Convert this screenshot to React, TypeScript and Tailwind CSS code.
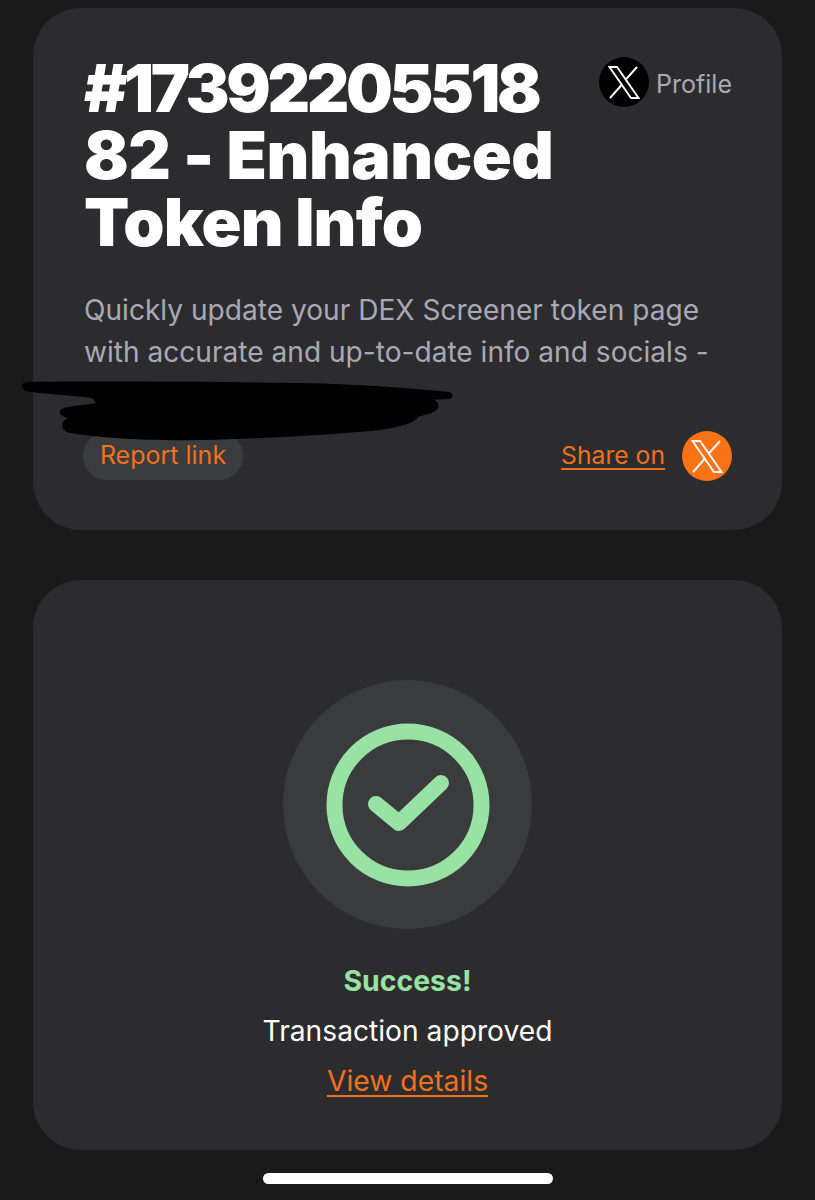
function XLogo({ bg }: { bg: string }) {
  return (
    <span className={`flex h-[50px] w-[50px] shrink-0 items-center justify-center rounded-full ${bg}`}>
      <svg viewBox="0 0 32 33" className="h-[33px] w-[32px]" fill="none" stroke="#fff" strokeWidth="1.9">
        <path d="M1.5 1 H9 L30.5 32 H23 Z" />
        <path d="M29 1 L18.3 13" />
        <path d="M14 18.5 L2 32" />
      </svg>
    </span>
  )
}

export default function App() {
  return (
    <div className="relative h-[1200px] w-[815px] overflow-hidden bg-[#1a1a1b] pt-2 font-['Inter',sans-serif]">
      <section className="mx-[33px] h-[522px] rounded-[48px] bg-[#2c2c2e] pl-[51px] pr-[50px] pt-[47px]">
        <div className="flex items-start justify-between">
          <h1 className="text-[66px] font-black leading-[67px] text-white">
            <span className="block tracking-[-3.4px]">#17392205518</span>
            <span className="block tracking-[-0.5px]">82 - Enhanced</span>
            <span className="block tracking-[-0.8px]">Token Info</span>
          </h1>
          <a className="mt-[2px] flex items-center gap-[7px] text-[25px] text-[#a9a9b1]">
            <XLogo bg="bg-black" />
            <span className="pt-[5px]">Profile</span>
          </a>
        </div>
        <p className="mt-[33px] text-[28.1px] leading-[42px] text-[#a9a9b6]">
          Quickly update your DEX Screener token page
          <br />
          with accurate and up-to-date info and socials -
        </p>
        <div className="mt-[58px] flex items-center justify-between">
          <a className="-ml-px flex h-[48px] w-[160px] items-center justify-center rounded-full bg-[#3a3c3e] text-[25px] text-[#f2701d]">
            Report link
          </a>
          <div className="flex items-center gap-[17px]">
            <a className="text-[24.7px] text-[#f2701d] underline decoration-2 underline-offset-4">Share on</a>
            <XLogo bg="bg-[#f97316]" />
          </div>
        </div>
      </section>

      <section className="mx-[33px] mt-[50px] flex h-[570px] flex-col items-center rounded-[48px] bg-[#2c2c2e] pt-[100px]">
        <div className="flex h-[249px] w-[249px] items-center justify-center rounded-full bg-[#3a3b3d]">
          <svg viewBox="0 0 164 164" className="h-[164px] w-[164px]" fill="none" stroke="#98e2a4" strokeWidth="16">
            <circle cx="82" cy="82" r="73.5" />
            <path d="M50 81 L73 100 L115 60" strokeLinecap="round" strokeLinejoin="round" />
          </svg>
        </div>
        <p className="mt-[34px] text-[28.4px] font-bold leading-[36px] text-[#98e2a4]">Success!</p>
        <p className="mt-[14px] text-[28.2px] leading-[36px] text-white">Transaction approved</p>
        <a className="mt-[14px] text-[28.3px] leading-[36px] text-[#f2701d] underline decoration-2 underline-offset-4">View details</a>
      </section>

      <div className="mx-auto mt-[23px] h-[11px] w-[290px] rounded-full bg-white" />

      {/* scribble over the redacted line */}
      <svg className="absolute left-0 top-[370px] h-[80px] w-[470px]" viewBox="0 370 470 80" fill="#000">
        <path d="M27 382 C100 381 240 382 300 383 C360 384 420 389 449 392 C454 393 454 398 449 399 C435 400 425 399 418 400 C425 397 432 398 436 401 C441 405 438 412 428 414 L418 417 C415 423 400 427 380 430 C340 434 280 438 200 440 C150 441 100 438 70 433 C60 430 60 422 68 418 C58 416 57 410 64 408 C75 405 85 405 96 403 L92 398 C70 395 40 394 26 391 C20 388 21 383 27 382 Z" />
      </svg>
    </div>
  )
}
